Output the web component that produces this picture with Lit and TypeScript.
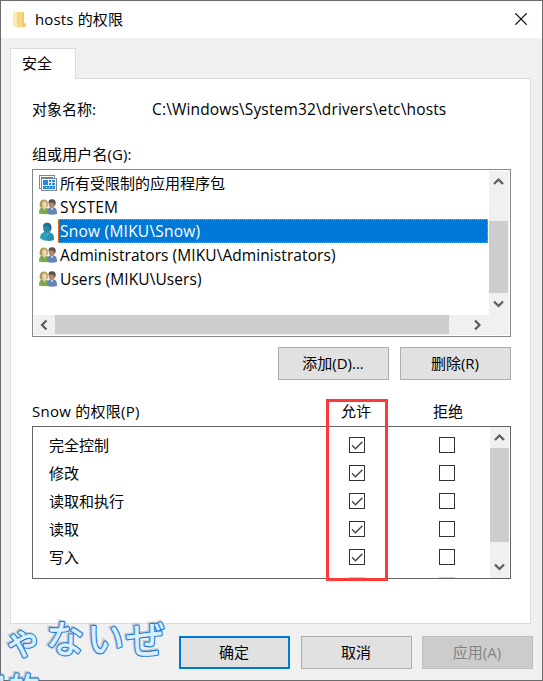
import { LitElement, html, css, svg, nothing } from "lit";
import { customElement, property } from "lit/decorators.js";
import { classMap } from "lit/directives/class-map.js";

type IconKind = "package" | "group" | "user";

const principals: { icon: IconKind; name: string; selected?: boolean; latin?: boolean; wide?: boolean }[] = [
  { icon: "package", name: "所有受限制的应用程序包" },
  { icon: "group", name: "SYSTEM", latin: true, wide: true },
  { icon: "user", name: "Snow (MIKU\\Snow)", selected: true, latin: true, wide: true },
  { icon: "group", name: "Administrators (MIKU\\Administrators)", latin: true },
  { icon: "group", name: "Users (MIKU\\Users)", latin: true },
];

const permissions = ["完全控制", "修改", "读取和执行", "读取", "写入"];

const packageIcon = svg`
  <g shape-rendering="crispEdges">
    <rect x=".5" y=".5" width="15" height="13" fill="#fff" stroke="#7d868f"/>
    <rect x="2" y="2" width="12" height="10" fill="#2b8be0"/>
    <rect x="2.5" y="3.500" width="15" height="12" fill="#fff" stroke="#7d868f"/>
    <rect x="4" y="5" width="12" height="9" fill="#2589dd"/>
    <path d="M9.5 5v5M12.5 5v5M9 7.500h7M4 10.500h12" stroke="#d9edff" fill="none"/>
    <path d="M7 12.500h1M10 12.500h1M13 12.500h1" stroke="#fff"/>
  </g>`;

const groupIcon = svg`
  <path d="M0 14.5c0-4 1-5.500 3.500-6.200h3.200c2.300.7 3.300 2.200 3.300 6.200q-5 1.500-10 0z" fill="#7fa850"/>
  <path d="M1 8.500C0 5 .8.600 5 .6s4.300 3.800 3.500 7.400z" fill="#a99a55"/>
  <ellipse cx="5.500" cy="5.500" rx="2.300" ry="3.200" fill="#efd0b0"/>
  <path d="M3.700 8.200 5.300 11l1.900-2.800z" fill="#f3dfc8"/>
  <path d="M8 15c0-4.500 1-6 3.500-6.500h3c2.500.5 3.500 2 3.500 6.500q-5 1.600-10 0z" fill="#6586b4"/>
  <path d="M11.400 8.200 13 11.300l1.700-3.100z" fill="#e8eef5"/>
  <ellipse cx="12.700" cy="5.200" rx="3" ry="4" fill="#b98765"/>
  <path d="M9.500 4.500C9 1.600 10.500.2 13 .2s4.500 1.600 3.400 5.600l-1 1.200-.5-3-3.700-.8z" fill="#594f4b"/>`;

const userIcon = svg`
  <path d="M1.500 15.500C1 11.500 2.500 10 6 9h4c4 1 5.500 3 4.800 8Q9 19.500 1.500 15.500z" fill="#2a91b0"/>
  <path d="M1.500 15.500C1 11.500 2.500 10 6 9l2.500 3.500-1.500 5.300q-3-.3-5.500-2.300z" fill="#2b9fc0"/>
  <path d="M6 9l3 3.800L10.300 9z" fill="#5fb3ca"/>
  <ellipse cx="8" cy="5" rx="3.900" ry="5.200" fill="#2f86ac"/>
  <path d="M3.800 3.500C4 .8 6-.5 8.600-.3s4.600 2.300 3.700 6.500l-1.300 2.500-.6-4.500-3-1.700z" fill="#27688e"/>`;

const chevrons = {
  up: "M0 7 4.500 2.500 9 7",
  down: "M0 1.500 4.500 6 9 1.500",
  left: "M6.500 .500 2 5 6.500 9.500",
  right: "M1 .500 5.500 5 1 9.500",
};

@customElement("scroll-strip")
class ScrollStrip extends LitElement {
  @property({ type: Boolean, reflect: true }) horizontal = false;

  static styles = css`
    :host { display: flex; flex-direction: column; background: #f0f0f0; box-sizing: border-box; }
    :host([horizontal]) { flex-direction: row; }
    .arrow { width: 19px; height: 21px; flex: none; display: flex; align-items: center; justify-content: center; }
    :host([horizontal]) .arrow { width: 21px; height: 19px; }
    .rail { flex: 1; display: flex; flex-direction: inherit; }
    svg { display: block; width: 10px; height: 10px; overflow: visible; }
    path { fill: none; stroke: #5b5b5b; stroke-width: 2.2; }
  `;

  private arrow(kind: keyof typeof chevrons) {
    return html`<div class="arrow"><svg viewBox="0 0 10 10"><path d=${chevrons[kind]}></path></svg></div>`;
  }

  render() {
    return html`${this.arrow(this.horizontal ? "left" : "up")}
      <div class="rail"><slot></slot></div>
      ${this.arrow(this.horizontal ? "right" : "down")}`;
  }
}

@customElement("check-square")
class CheckSquare extends LitElement {
  @property({ type: Boolean }) checked = false;

  static styles = css`
    :host { display: block; width: 16px; height: 16px; box-sizing: border-box; border: 1px solid #333; background: #fff; }
    svg { display: block; width: 14px; height: 14px; }
    path { fill: none; stroke: #444; stroke-width: 1.4; }
  `;

  render() {
    return this.checked
      ? html`<svg viewBox="0 0 14 14"><path d="M2 7.200 5.500 10.700 12.400 3.800"></path></svg>`
      : nothing;
  }
}

@customElement("app-root")
class AppRoot extends LitElement {
  static styles = css`
    :host {
      display: block; position: relative; width: 543px; height: 681px; overflow: hidden;
      font: 15px/20px "Open Sans", "Noto Sans CJK SC", sans-serif; color: #000;
    }
    * { box-sizing: border-box; }
    .window { height: 681px; border: 1px solid #6d6b6d; background: #f0f0f0; display: flex; flex-direction: column; }
    .title { height: 37px; background: #fff; display: flex; align-items: center; padding: 0 15px 1px 12px; flex: none; }
    .folder { width: 13px; height: 18px; margin: 1px 9px 0 0; }
    .caption { flex: 1; letter-spacing: .15px; }
    .close { width: 12px; height: 12px; }
    .tab { width: 66px; height: 31px; margin: 10px 0 -1px 9px; border: 1px solid #dcdcdc; border-bottom: 0; background: #fff; padding: 4px 0 0 11px; position: relative; z-index: 1; flex: none; }
    .page { width: 521px; height: 546px; margin-left: 9px; border: 1px solid #dcdcdc; background: #fff; padding: 20px 19px 0 21px; flex: none; }
    .object { display: flex; height: 20px; }
    .object .key { width: 120px; }
    .path { font-size: 15.5px; letter-spacing: .15px; }
    .label { margin-top: 25px; height: 20px; letter-spacing: .1px; }
    .list { height: 168px; margin-top: 5px; border: 1px solid #828790; padding: 1px; display: grid; grid-template: 144px 20px / 455px 20px; }
    .rows { overflow: hidden; }
    .row { display: flex; height: 24px; padding-left: 5px; }
    .icon { width: 18px; height: 18px; margin: 4px 1px 0 0; flex: none; overflow: visible; }
    .name { width: 430px; height: 24px; padding: 2px 0 0 2px; white-space: pre; line-height: 20px; }
    .latin { font-size: 15.5px; letter-spacing: .08px; }
    .latin.wide { letter-spacing: .24px; }
    .name.selected { background: #0078d7; color: #fff; border: 1px dotted #ff8728; padding: 1px 0 0 1px; }
    .h1 { grid-column: 1 / 3; padding-right: 20px; }
    .thumb { background: #cdcdcd; }
    .t1 { width: 19px; height: 72px; margin-top: 29px; }
    .t2 { width: 394px; height: 19px; }
    .t3 { width: 19px; height: 94px; }
    .actions { display: flex; justify-content: flex-end; gap: 11px; margin-top: 10px; }
    button { width: 111px; height: 33px; border: 1px solid #adadad; background: #e1e1e1; color: #000; font: inherit; padding: 0 1px 2px 0; }
    button.default { border: 2px solid #0078d7; }
    button:disabled { background: #ccc; border-color: #bfbfbf; color: #838383; }
    .heads { display: flex; margin-top: 21px; height: 20px; }
    .heads span { flex: none; }
    .heads .who { width: 309px; letter-spacing: .25px; }
    .heads .col { width: 92px; }
    .perms { height: 153px; margin-top: 5px; border: 1px solid #646464; display: flex; overflow: hidden; }
    .grid { width: 457px; padding-top: 4px; height: 151px; overflow: hidden; }
    .perm { display: flex; align-items: center; height: 28px; padding-left: 16px; }
    .perm span { width: 300px; }
    .perm check-square + check-square { margin-left: 74px; }
    .cut { display: flex; padding: 6px 0 0 316px; gap: 74px; }
    .cut i { width: 16px; height: 5px; background: #ccc; }
    .footer { display: flex; margin: 12px 0 0 178px; gap: 11px; }
    .footer button:last-child { margin-left: -1px; }
    .mark { position: absolute; left: 326px; top: 399px; width: 62px; height: 182px; border: 3px solid #ff3838; }
    .lyrics { position: absolute; left: 0; top: 600px; width: 178px; height: 81px; overflow: hidden; }
    .lyrics text { font-family: "Noto Sans CJK JP", sans-serif; font-weight: 400; }
    .edge { fill: #1f7cdb; stroke: #1f7cdb; stroke-width: 3; stroke-linejoin: round; }
    .fill { fill: #dcefff; stroke: #dcefff; stroke-width: .7; stroke-linejoin: round; }
    .shade { fill: #999; stroke: #999; stroke-width: 3.4; opacity: .45; }
  `;

  private lyric(cls: string, d = 0) {
    return svg`<g class=${cls} transform="translate(${-d} ${-d})">
      <text font-size="37" x="5" y="54" transform="rotate(-8 25 45)">ゃ</text>
      <text font-size="38" x="46" y="53" transform="rotate(3 65 40)">な</text>
      <text font-size="37" x="87" y="53">い</text>
      <text font-size="39" x="126" y="54" transform="rotate(-2 145 40)">ぜ</text>
      <text font-size="32" x="-24" y="101">目的</text>
    </g>`;
  }

  private icon(kind: IconKind) {
    const art = { package: packageIcon, group: groupIcon, user: userIcon }[kind];
    return html`<svg class="icon" viewBox="0 0 18 18">${art}</svg>`;
  }

  render() {
    return html`
      <div class="window">
        <div class="title">
          <svg class="folder" viewBox="0 0 13 18">
            <path d="M3 1h8v11l1.500.5V16H3z" fill="#f5d77f"></path>
            <path d="M0 0l4 2.500V17L0 15z" fill="#ffe9ad"></path>
            <path d="M9 1h2v11l1.500.5V16H9z" fill="#efcb6b"></path>
          </svg>
          <span class="caption">hosts 的权限</span>
          <svg class="close" viewBox="0 0 12 12"><path d="M.3.3l11.400 11.400M11.700.3.3 11.700" stroke="#000" stroke-width="1.200"></path></svg>
        </div>
        <div class="tab">安全</div>
        <div class="page">
          <div class="object"><span class="key">对象名称:</span><span class="path">C:\\Windows\\System32\\drivers\\etc\\hosts</span></div>
          <div class="label">组或用户名(G):</div>
          <div class="list">
            <div class="rows">
              ${principals.map((p) => html`<div class="row">${this.icon(p.icon)}<div class=${classMap({ name: true, latin: !!p.latin, wide: !!p.wide, selected: !!p.selected })}>${p.name}</div></div>`)}
            </div>
            <scroll-strip><div class="thumb t1"></div></scroll-strip>
            <scroll-strip class="h1" horizontal><div class="thumb t2"></div></scroll-strip>
          </div>
          <div class="actions"><button>添加(D)...</button><button>删除(R)</button></div>
          <div class="heads"><span class="who">Snow 的权限(P)</span><span class="col">允许</span><span class="col">拒绝</span></div>
          <div class="perms">
            <div class="grid">
              ${permissions.map((p) => html`<div class="perm"><span>${p}</span><check-square checked></check-square><check-square></check-square></div>`)}
              <div class="cut"><i></i><i></i></div>
            </div>
            <scroll-strip><div class="thumb t3"></div></scroll-strip>
          </div>
        </div>
        <div class="footer"><button class="default">确定</button><button>取消</button><button disabled>应用(A)</button></div>
      </div>
      <div class="mark"></div>
      <svg class="lyrics" viewBox="0 0 178 81">${this.lyric("shade", 1)}${this.lyric("edge")}${this.lyric("fill")}</svg>
    `;
  }
}
